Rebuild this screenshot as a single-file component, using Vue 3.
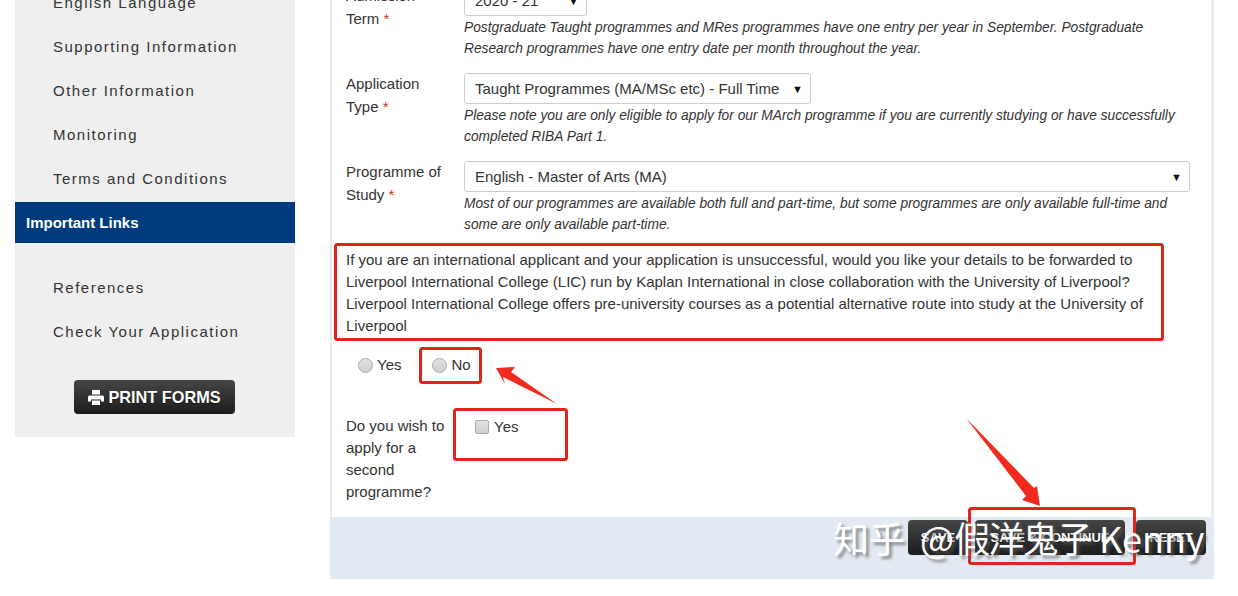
<script setup>
const navTop = ['English Language', 'Supporting Information', 'Other Information', 'Monitoring', 'Terms and Conditions'];
const navBottom = ['References', 'Check Your Application'];
</script>

<template>
  <div class="page">
    <div class="layout">
      <aside class="sidebar">
        <a v-for="item in navTop" :key="item" class="nav-item">{{ item }}</a>
        <div class="nav-head">Important Links</div>
        <div class="nav-links">
          <a v-for="item in navBottom" :key="item" class="nav-item">{{ item }}</a>
        </div>
        <button class="btn btn-print">
          <svg class="print-icon" viewBox="0 0 16 15" width="16" height="15">
            <path fill="#fff" d="M4 0h8v4.500H4zM1.500 5.500h13A1.500 1.500 0 0 1 16 7v4.500h-3V9.500H3v2H0V7a1.500 1.500 0 0 1 1.500-1.500zM4 10.500h8V15H4z" />
          </svg>
          PRINT FORMS
        </button>
      </aside>

      <main class="main">
        <div class="form">
          <div class="row">
            <label class="label">Admission Term <span class="req">*</span></label>
            <div class="field">
              <div class="select select-sm"><span>2020 - 21</span><i class="caret">▼</i></div>
              <p class="note">Postgraduate Taught programmes and MRes programmes have one entry per year in September. Postgraduate Research programmes have one entry date per month throughout the year.</p>
            </div>
          </div>
          <div class="row">
            <label class="label">Application Type <span class="req">*</span></label>
            <div class="field">
              <div class="select select-md"><span>Taught Programmes (MA/MSc etc) - Full Time</span><i class="caret">▼</i></div>
              <p class="note">Please note you are only eligible to apply for our MArch programme if you are currently studying or have successfully completed RIBA Part 1.</p>
            </div>
          </div>
          <div class="row">
            <label class="label">Programme of Study <span class="req">*</span></label>
            <div class="field">
              <div class="select"><span>English - Master of Arts (MA)</span><i class="caret">▼</i></div>
              <p class="note">Most of our programmes are available both full and part-time, but some programmes are only available full-time and some are only available part-time.</p>
            </div>
          </div>

          <p class="question">If you are an international applicant and your application is unsuccessful, would you like your details to be forwarded to Liverpool International College (LIC) run by Kaplan International in close collaboration with the University of Liverpool? Liverpool International College offers pre-university courses as a potential alternative route into study at the University of Liverpool</p>

          <div class="radios">
            <label class="choice"><input type="radio" name="lic" class="radio" />Yes</label>
            <label class="choice"><input type="radio" name="lic" class="radio" />No</label>
          </div>

          <div class="second">
            <div class="second-label">Do you wish to apply for a second programme?</div>
            <label class="choice check"><input type="checkbox" class="checkbox" />Yes</label>
          </div>
        </div>

        <div class="actions">
          <button class="btn btn-action btn-save">SAVE</button>
          <button class="btn btn-action btn-continue">SAVE &amp; CONTINUE</button>
          <button class="btn btn-action btn-reset">RESET</button>
        </div>
      </main>
    </div>

    <!-- red annotations drawn over the page -->
    <svg class="marks" viewBox="0 0 1238 596" width="1238" height="596">
      <g fill="none" stroke="#e0241c" stroke-width="3">
        <rect x="335.500" y="244.500" width="827" height="95" rx="2" />
        <rect x="420.500" y="348.500" width="60" height="34" rx="2" />
        <rect x="454.500" y="409.500" width="112" height="50" rx="2" />
        <rect x="969.500" y="508.500" width="165" height="55" rx="2" />
      </g>
      <polygon fill="#f02a1c" points="496,368 515,367 511,372 557,404 503,377 505,384" />
      <polygon fill="#f02a1c" points="966,418 1034,488 1037,486 1040,506 1022,500 1026,496" />
    </svg>

    <div class="watermark">知乎 <span class="wm-at">@</span><span class="wm-name">假洋鬼子</span> Kenny</div>
  </div>
</template>

<style scoped>
.page {
  position: relative;
  width: 1238px;
  height: 596px;
  overflow: hidden;
  background: #fff;
  font-family: "Liberation Sans", Arial, sans-serif;
  font-size: 15px;
  color: #333;
}

.layout {
  display: flex;
  align-items: flex-start;
  gap: 35px;
  margin-top: -19px;
  padding-left: 15px;
}

.sidebar {
  width: 280px;
  display: flex;
  flex-direction: column;
  background: #efefef;
  padding-bottom: 23px;
}

.nav-item {
  height: 44px;
  line-height: 44px;
  padding-left: 38px;
  letter-spacing: 1.5px;
  color: #333;
}

.nav-head {
  margin-top: 1px;
  height: 41px;
  line-height: 42px;
  padding-left: 11px;
  background: #003c7d;
  color: #fff;
  font-weight: 700;
}

.nav-links {
  display: flex;
  flex-direction: column;
  margin-top: 23px;
}

.btn {
  border: 0;
  border-radius: 4px;
  background: linear-gradient(#464646, #1c1c1c);
  color: #fff;
  font-family: inherit;
  font-weight: 700;
  text-shadow: 0 1px 1px rgba(0, 0, 0, 0.6);
}

.btn-print {
  display: flex;
  align-items: center;
  justify-content: center;
  gap: 4px;
  align-self: flex-start;
  width: 161px;
  height: 34px;
  margin: 26px 0 0 59px;
  font-size: 16.300px;
  padding: 0;
}

.main {
  width: 884px;
  background: #fff;
}

.form {
  padding: 4px 0 0 14px;
  border-left: 2px solid #e8eaed;
  border-right: 3px solid #e6ecf1;
}

.row {
  display: flex;
  padding-bottom: 15px;
}

.label {
  width: 118px;
  flex: none;
  margin-top: -1px;
  padding-right: 14px;
  box-sizing: border-box;
  line-height: 23px;
}

.req {
  color: #c7322c;
}

.field {
  width: 726px;
}

.select {
  display: flex;
  justify-content: space-between;
  align-items: center;
  box-sizing: border-box;
  height: 31px;
  padding: 0 7px 0 10px;
  border: 1px solid #ccc;
  border-radius: 3px;
}

.select-sm {
  width: 123px;
}

.select-md {
  width: 347px;
}

.caret {
  font-style: normal;
  font-size: 11px;
  color: #111;
}

.note {
  margin: 0;
  padding-top: 1px;
  height: 41px;
  font-size: 13.750px;
  font-style: italic;
  line-height: 21px;
}

.question {
  width: 810px;
  margin: 0;
  line-height: 22px;
}

.radios {
  display: flex;
  gap: 31px;
  margin: 17px 0 0 12px;
  height: 22px;
}

.choice {
  display: flex;
  align-items: center;
  gap: 4px;
  line-height: 22px;
}

.radio,
.checkbox {
  appearance: none;
  width: 15px;
  height: 15px;
  margin: 0;
  border: 1px solid #aaa;
  background: linear-gradient(#e4e4e4, #cfcfcf);
}

.radio {
  border-radius: 50%;
}

.checkbox {
  width: 14px;
  height: 14px;
  border-radius: 2px;
}

.second {
  display: flex;
  margin-top: 39px;
  padding-bottom: 14px;
}

.second-label {
  width: 115px;
  flex: none;
  padding-right: 12px;
  box-sizing: border-box;
  line-height: 22px;
}

.check {
  align-self: flex-start;
  gap: 5px;
  margin: 1px 0 0 14px;
}

.actions {
  display: flex;
  justify-content: flex-end;
  height: 59px;
  padding: 3px 8px 0 0;
  background: #e3e9f2;
}

.btn-action {
  height: 35px;
  font-size: 13px;
  padding: 0;
}

.btn-save {
  width: 60px;
}

.btn-continue {
  width: 150px;
  margin-left: 7px;
}

.btn-reset {
  width: 70px;
  margin-left: 11px;
}

.marks {
  position: absolute;
  left: 0;
  top: 0;
  pointer-events: none;
}

.watermark {
  position: absolute;
  left: 833px;
  top: 515px;
  font-family: "Noto Sans CJK SC", "Liberation Sans", sans-serif;
  font-size: 36px;
  line-height: 44px;
  color: #fff;
  text-shadow: 3px 3px 3px rgba(90, 90, 90, 0.7);
  white-space: nowrap;
}

.wm-at {
  margin-left: 7px;
}

.wm-name {
  letter-spacing: -1.800px;
}
</style>
